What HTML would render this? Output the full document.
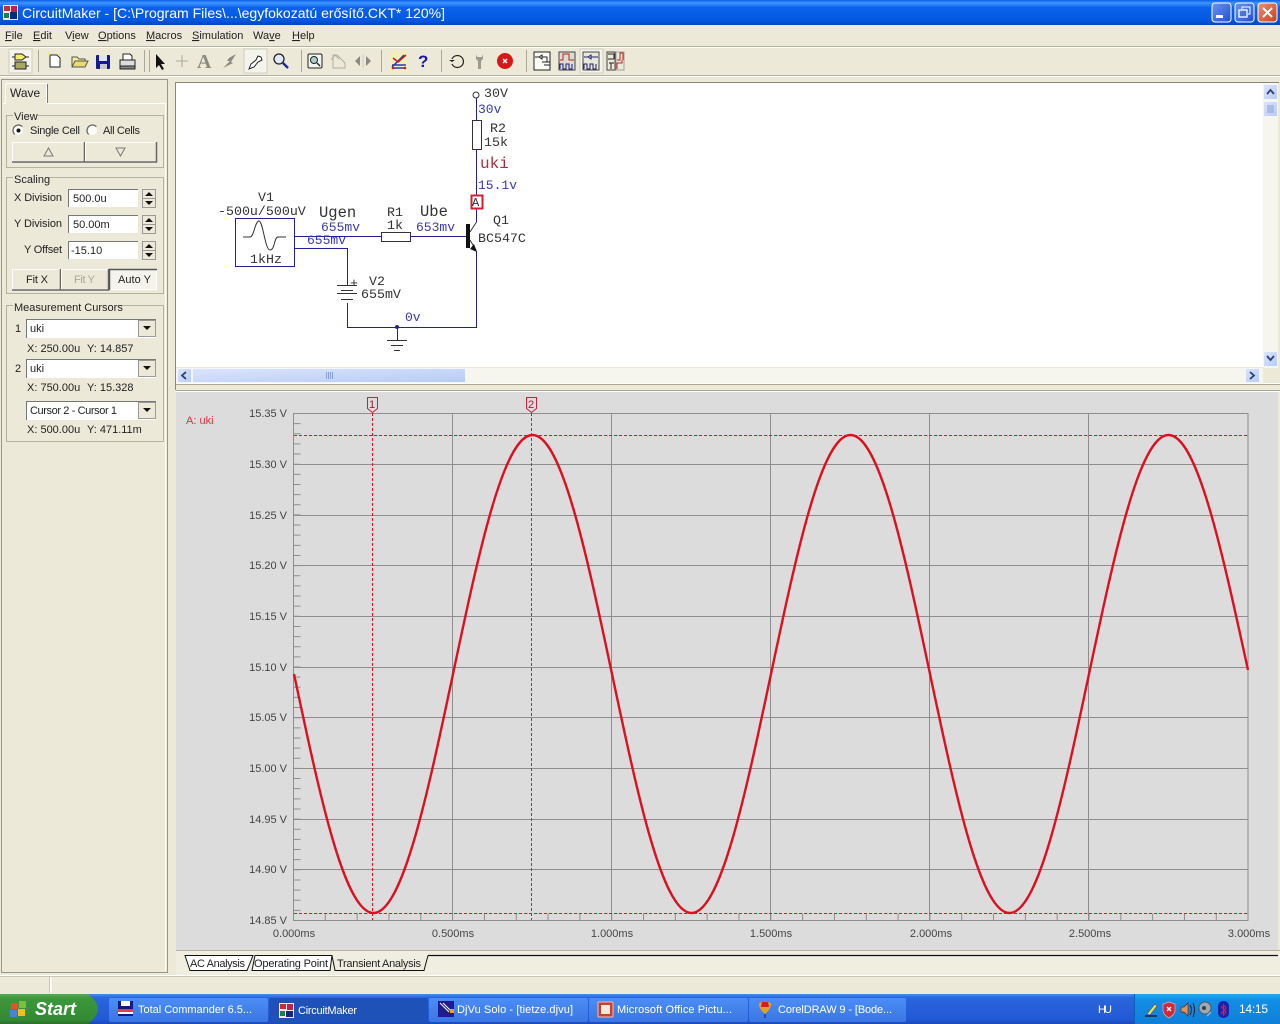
<!DOCTYPE html>
<html><head><meta charset="utf-8"><title>CircuitMaker</title>
<style>
html,body{margin:0;padding:0;background:#ece9d8;overflow:hidden}
svg{display:block}
text{font-family:"Liberation Sans",sans-serif;font-size:11px;fill:#222}
.m{font-family:"Liberation Mono",monospace;font-size:13.3px;fill:#333}
.b{font-family:"Liberation Mono",monospace;font-size:13px;fill:#3a3aa8}
.u{text-decoration:underline}
.yl{font-size:11px;fill:#444;text-anchor:end}
.xl{font-size:11px;fill:#444;text-anchor:middle}
.tb{font-size:11px;fill:#fff}
.w{stroke:#20209a;fill:none}
</style></head><body>
<svg width="1280" height="1024" viewBox="0 0 1280 1024" xmlns="http://www.w3.org/2000/svg">
<defs>
<linearGradient id="tg" x1="0" y1="0" x2="0" y2="1"><stop offset="0" stop-color="#0a5fe8"/><stop offset=".12" stop-color="#3d95ff"/><stop offset=".3" stop-color="#0a62ec"/><stop offset=".8" stop-color="#0358e0"/><stop offset="1" stop-color="#0246c4"/></linearGradient>
<linearGradient id="bar" x1="0" y1="0" x2="0" y2="1"><stop offset="0" stop-color="#4a8cf0"/><stop offset=".12" stop-color="#2a66dc"/><stop offset=".85" stop-color="#2259d6"/><stop offset="1" stop-color="#1a48b8"/></linearGradient>
<linearGradient id="btn" x1="0" y1="0" x2="0" y2="1"><stop offset="0" stop-color="#4c8ef5"/><stop offset="1" stop-color="#3a76e4"/></linearGradient>
<linearGradient id="st" x1="0" y1="0" x2="0" y2="1"><stop offset="0" stop-color="#57a957"/><stop offset=".15" stop-color="#3b983b"/><stop offset=".85" stop-color="#358a35"/><stop offset="1" stop-color="#2a702a"/></linearGradient>
<linearGradient id="tray" x1="0" y1="0" x2="0" y2="1"><stop offset="0" stop-color="#20a8f0"/><stop offset=".2" stop-color="#128fe6"/><stop offset="1" stop-color="#0f7fd8"/></linearGradient>
<linearGradient id="wb" x1="0" y1="0" x2="1" y2="1"><stop offset="0" stop-color="#6b96f0"/><stop offset="1" stop-color="#1f4fd0"/></linearGradient>
<linearGradient id="wr" x1="0" y1="0" x2="1" y2="1"><stop offset="0" stop-color="#ec9076"/><stop offset="1" stop-color="#c8401c"/></linearGradient>
<linearGradient id="sb" x1="0" y1="0" x2="1" y2="1"><stop offset="0" stop-color="#dbe5fb"/><stop offset="1" stop-color="#b7cbf5"/></linearGradient>
</defs>

<rect width="1280" height="1024" fill="#ece9d8"/>

<!-- title bar -->
<rect width="1280" height="25" fill="url(#tg)"/>
<rect x="3" y="5" width="15" height="15" fill="#f4e8ec"/>
<rect x="4" y="6" width="6" height="5" fill="#c83030"/><rect x="11" y="6" width="6" height="6" fill="#c02050"/><rect x="10" y="12" width="7" height="7" fill="#102880"/><rect x="4" y="13" width="5" height="5" fill="#208040"/>
<text x="22" y="18" textLength="423" lengthAdjust="spacingAndGlyphs" style="font-size:14px;fill:#fff">CircuitMaker - [C:\Program Files\...\egyfokozatú erősítő.CKT* 120%]</text>
<rect x="1212" y="3" width="19" height="19" rx="3" fill="url(#wb)" stroke="#fff"/><rect x="1216" y="15" width="7" height="3" fill="#fff"/>
<rect x="1235" y="3" width="19" height="19" rx="3" fill="url(#wb)" stroke="#fff"/><rect x="1239" y="10" width="8" height="7" fill="none" stroke="#fff" stroke-width="1.3"/><path d="M1242 9V7h8v7h-2" fill="none" stroke="#fff"/>
<rect x="1258" y="3" width="19" height="19" rx="3" fill="url(#wr)" stroke="#fff"/><path d="M1263 8l9 9M1272 8l-9 9" stroke="#fff" stroke-width="2"/>

<!-- menu -->
<text x="5" y="39"><tspan class="u">F</tspan>ile</text>
<text x="33" y="39"><tspan class="u">E</tspan>dit</text>
<text x="65" y="39">V<tspan class="u">i</tspan>ew</text>
<text x="98" y="39"><tspan class="u">O</tspan>ptions</text>
<text x="146" y="39"><tspan class="u">M</tspan>acros</text>
<text x="192" y="39"><tspan class="u">S</tspan>imulation</text>
<text x="253" y="39">Wa<tspan class="u">v</tspan>e</text>
<text x="292" y="39"><tspan class="u">H</tspan>elp</text>
<path d="M0 46.5H1280" stroke="#b5b29f"/><path d="M0 47.5H1280" stroke="#fff"/>
<path d="M0 75.5H1280" stroke="#b5b29f"/><path d="M0 76.5H1280" stroke="#fff"/>

<!-- toolbar -->
<path d="M38.5 50V72M144.5 50V72M149.5 50V72M301.5 50V72M381.5 50V72M441.5 50V72M526.5 50V72" stroke="#aca899"/>
<rect x="9" y="49" width="23" height="24" fill="#f5f4ec" stroke="#d0cdbd"/>
<path d="M15 54h7l4 3-4 3h-7z" fill="#f4ee60" stroke="#222"/><path d="M12 57h3M26 57h3M12 66h3M26 66h3" stroke="#222"/><rect x="15" y="62" width="11" height="7" fill="#a8a860" stroke="#222"/>
<path d="M50 55h7l3 3v9h-10z" fill="#fff" stroke="#222"/><path d="M48 53l2 2M60 54l-2 2" stroke="#ee0"/>
<path d="M72 66v-9h5l2 2h6v2" fill="#f4ee90" stroke="#555"/><path d="M72 67l3-6h13l-3 6z" fill="#e8dc70" stroke="#555"/>
<rect x="96" y="55" width="14" height="14" rx="1" fill="#121a90"/><rect x="99" y="55" width="8" height="6" fill="#dfe4f8"/><rect x="100" y="64" width="7" height="5" fill="#c8c8c8"/>
<path d="M123 54h7l2 2v5h-9z" fill="#fff" stroke="#222"/><rect x="120" y="60" width="15" height="6" fill="#ddd" stroke="#222"/><rect x="120" y="66" width="15" height="3" fill="#888" stroke="#222"/>
<path d="M156 54v14l3-3 3 5 2-1-3-5h4z" fill="#111"/>
<path d="M182 55v12M176 61h12" stroke="#b8b6a8" stroke-width="1.3"/>
<text x="197" y="68" style="font-family:'Liberation Serif',serif;font-size:20px;font-weight:bold;fill:#8a8a80">A</text>
<path d="M236 54l-7 4-2 3 3 0-7 7 10-5-2-1 5-8z" fill="#8a8a80"/>
<rect x="244" y="49" width="23" height="24" fill="#f5f4ec" stroke="#d0cdbd"/>
<path d="M249 69l2-5 5-4 2-4 3 1 1 3-4 2-4 5z" fill="#fff" stroke="#222"/>
<circle cx="279" cy="59" r="5" fill="#dfeaf5" stroke="#222" stroke-width="1.3"/><path d="M283 63l5 5" stroke="#1a2a9c" stroke-width="2.4"/>
<rect x="308" y="54" width="14" height="14" rx="1.5" fill="#f4f4f0" stroke="#222"/><circle cx="314" cy="60" r="3.5" fill="#a8d0d0" stroke="#222"/><path d="M317 63l3 3" stroke="#222" stroke-width="1.4"/>
<path d="M333 68V55h4l8 8v5z" fill="none" stroke="#b0aea0"/><path d="M331 60l4-5 4 4" fill="none" stroke="#b0aea0"/>
<path d="M360 56l-5 5 5 5zM366 56l5 5-5 5z" fill="#8a8a80"/><path d="M363 54V68" stroke="#ccc"/>
<rect x="390" y="51" width="18" height="22" fill="#f6f0a8" opacity=".6"/>
<path d="M392 67l6-6 6-6M392 65h14M392 68h14" stroke="#2a3ab0" stroke-width="1.5" fill="none"/><path d="M393 58l5 4 8-7" stroke="#c02020" stroke-width="1.6" fill="none"/><circle cx="393" cy="68" r="1.3" fill="#c02020"/><circle cx="405" cy="68" r="1.3" fill="#c02020"/>
<text x="418" y="67" style="font-size:17px;font-weight:bold;fill:#1a1a9c">?</text>
<path d="M452 59a6 6 0 1 1 0 5" fill="none" stroke="#222" stroke-width="1.2"/><path d="M449 60h6l-3 2z" fill="#222"/>
<path d="M476 54v5l2 2v8h3v-8l2-2v-5l-1 3h-5z" fill="#9a9a8e"/>
<circle cx="505" cy="61" r="8" fill="#d81818"/><path d="M503 59l4 4M507 59l-4 4" stroke="#fff" stroke-width="1.5"/>
<rect x="534" y="52" width="16" height="18" fill="#fafaf6" stroke="#222"/><path d="M535 57h4l3-2v4l-3-2M542 57h5v5M542 62h8M544 65h6" stroke="#222" fill="none"/>
<rect x="559" y="52" width="16" height="18" fill="#dcdcd0" stroke="#444"/><path d="M560 60h3v-6h6v6h5" stroke="#c02020" fill="none"/><path d="M560 69v-5h3v5h3v-5h3v5h3v-5" stroke="#202080" fill="none"/>
<rect x="580" y="49" width="23" height="24" fill="#f5f4ec" stroke="#d0cdbd"/>
<rect x="583" y="52" width="16" height="18" fill="#e8e8dc" stroke="#444"/><path d="M584 57h4l3-2v4l-3-2M591 57h7M584 69v-5h3v5h3v-5h3v5h3v-5" stroke="#202060" fill="none"/>
<path d="M608 54h6v5M608 59h6M609 63h5M611 63v6" stroke="#222" fill="none"/><rect x="607" y="52" width="8" height="18" fill="none" stroke="#444"/><path d="M617 60h3v-7h3v7M617 69v-6h5v-3" stroke="#c02020" fill="none"/><rect x="616" y="52" width="8" height="18" fill="none" stroke="#a0a0a0"/>

<!-- left panel -->
<path d="M1.5 79.5H167.5V972.5H1.5z" fill="#ece9d8" stroke="#9a9786"/>
<path d="M2.500 103.500H5.500V85l1-1.500H46.500V103.500H165.500V971" fill="none" stroke="#fff"/>
<path d="M47.500 84V103" stroke="#777"/>
<text x="10" y="97" style="font-size:12px">Wave</text>
<path d="M13 115.500H6.500V167.500H163.500V115.500H38" fill="none" stroke="#b5b29f"/>
<text x="14" y="120">View</text>
<path d="M14.600 134.400a5.500 5.500 0 0 1 7.800-7.800" fill="none" stroke="#666" stroke-width="1.200"/><circle cx="18.500" cy="130.500" r="4.500" fill="#fff"/><circle cx="18.500" cy="130.500" r="2" fill="#111"/>
<text x="30" y="134" textLength="50">Single Cell</text>
<circle cx="92.500" cy="130.500" r="4.500" fill="#fff"/><path d="M88.600 134.400a5.500 5.500 0 0 1 7.800-7.800" fill="none" stroke="#666" stroke-width="1.200"/>
<text x="103" y="134" textLength="37">All Cells</text>
<rect x="12.500" y="142.500" width="72" height="19" fill="#ece9d8" stroke="#fff"/><path d="M84.500 142V162H12" stroke="#666" stroke-width="1.500" fill="none"/>
<rect x="85.500" y="142.500" width="71" height="19" fill="#ece9d8" stroke="#fff"/><path d="M156.500 142V162H85" stroke="#666" stroke-width="1.500" fill="none"/>
<path d="M48.500 148l-4.500 8h9zM116 148h9l-4.500 8z" fill="none" stroke="#777"/>

<path d="M13 177.500H6.500V293.500H163.500V177.500H50" fill="none" stroke="#b5b29f"/>
<text x="14" y="183">Scaling</text>
<text x="14" y="201" textLength="48">X Division</text>
<text x="14" y="227" textLength="48">Y Division</text>
<text x="24" y="253" textLength="38">Y Offset</text>
<rect x="68" y="189" width="70" height="18" fill="#fff"/><rect x="68" y="215" width="70" height="18" fill="#fff"/><rect x="68" y="241" width="70" height="18" fill="#fff"/>
<path d="M68.500 207V189.500H138M68.500 233V215.500H138M68.500 259V241.500H138" fill="none" stroke="#777"/>
<text x="73" y="202">500.0u</text><text x="73" y="228">50.00m</text><text x="71" y="254">-15.10</text>
<g fill="#ece9d8" stroke="#999">
<rect x="142.500" y="189.500" width="13" height="9"/><rect x="142.500" y="198.500" width="13" height="9"/>
<rect x="142.500" y="215.500" width="13" height="9"/><rect x="142.500" y="224.500" width="13" height="9"/>
<rect x="142.500" y="241.500" width="13" height="9"/><rect x="142.500" y="250.500" width="13" height="9"/>
</g>
<path d="M149 192l-4 4h8zM145 201h8l-4 4zM149 218l-4 4h8zM145 227h8l-4 4zM149 244l-4 4h8zM145 253h8l-4 4z" fill="#111"/>
<rect x="12.500" y="269.500" width="48" height="20" fill="#ece9d8" stroke="#fff"/><path d="M60.500 269V290H12" stroke="#666" stroke-width="1.500" fill="none"/>
<rect x="61.500" y="269.500" width="47" height="20" fill="#ece9d8" stroke="#fff"/><path d="M108.500 269V290H61" stroke="#666" stroke-width="1.500" fill="none"/>
<rect x="109.500" y="269.500" width="47" height="20" fill="#f5f4ec" stroke="#fff"/><path d="M109.500 290V269.500H157" stroke="#555" stroke-width="1.500" fill="none"/>
<text x="26" y="283" textLength="22">Fit X</text>
<text x="74" y="283" textLength="21" style="fill:#aaa79a">Fit Y</text>
<text x="118" y="283" textLength="33">Auto Y</text>

<path d="M13 305.500H6.500V441.500H163.500V305.500H117" fill="none" stroke="#b5b29f"/>
<text x="14" y="311">Measurement Cursors</text>
<text x="15" y="332">1</text><text x="15" y="372">2</text>
<rect x="26" y="319" width="130" height="19" fill="#fff"/><rect x="26" y="359" width="130" height="19" fill="#fff"/><rect x="26" y="401" width="130" height="19" fill="#fff"/>
<path d="M26.500 338V319.500H156M26.500 378V359.500H156M26.500 420V401.500H156" fill="none" stroke="#777"/>
<g fill="#ece9d8" stroke="#999">
<rect x="138.500" y="320.500" width="17" height="16"/><rect x="138.500" y="360.500" width="17" height="16"/><rect x="138.500" y="402.500" width="17" height="16"/>
</g>
<path d="M143 326h8l-4 4zM143 366h8l-4 4zM143 408h8l-4 4z" fill="#111"/>
<text x="30" y="332">uki</text><text x="30" y="372">uki</text><text x="30" y="414" textLength="87">Cursor 2 - Cursor 1</text>
<text x="27" y="352">X: 250.00u</text><text x="87" y="352">Y: 14.857</text>
<text x="27" y="391">X: 750.00u</text><text x="87" y="391">Y: 15.328</text>
<text x="27" y="433">X: 500.00u</text><text x="87" y="433">Y: 471.11m</text>

<!-- circuit panel -->
<path d="M175 82.500H1279M175.500 82V390" stroke="#8a8778"/>
<rect x="176" y="83" width="1087" height="284" fill="#fff"/>
<rect x="1263" y="83" width="15" height="285" fill="#f6f5ee"/>
<rect x="176" y="368" width="1087" height="15" fill="#f6f5ee"/>
<g fill="url(#sb)" stroke="#f4f6fe">
<rect x="1263.500" y="84.500" width="14" height="15" rx="1"/><rect x="1263.500" y="101.500" width="14" height="15" rx="1"/><rect x="1263.500" y="351.500" width="14" height="15" rx="1"/>
<rect x="177.500" y="368.500" width="14" height="14" rx="1"/><rect x="192.500" y="368.500" width="273" height="14" rx="1"/><rect x="1245.500" y="368.500" width="14" height="14" rx="1"/>
</g>
<path d="M1267 94l3.500-4 3.500 4M1267 356l3.500 4 3.500-4M186 372l-4 3.500 4 3.500M1250 372l4 3.500-4 3.500" fill="none" stroke="#2c3f78" stroke-width="1.800"/>
<path d="M1267 106h7M1267 108h7M1267 110h7M1267 112h7M326.500 372v7M328.500 372v7M330.500 372v7M332.500 372v7" stroke="#8aa0d4"/>
<path d="M176 383.500H1280" stroke="#fff"/><path d="M176 384.500H1280" stroke="#aca899"/><path d="M176 390.500H1280" stroke="#aca899"/><path d="M176 391.500H1280" stroke="#fff"/>

<!-- schematic -->
<circle cx="476" cy="95" r="3" fill="#fff" stroke="#333"/>
<path class="w" d="M476.500 98V120M476.500 149V195M476.500 208V222M295 236.500H381M410 236.500H466M476.500 251V327.500H347.500V303M347.500 285V248.500H295M397.500 327V340"/>
<rect x="472.500" y="120.500" width="9" height="29" fill="#fff" stroke="#333"/>
<rect x="381.500" y="232.500" width="29" height="9" fill="#fff" stroke="#333"/>
<rect x="471.500" y="195.500" width="11" height="13" fill="#fff" stroke="#d02030" stroke-width="2"/>
<text x="472" y="206" class="m" style="font-size:12px">A</text>
<path d="M476.500 222L470 232" stroke="#333" fill="none"/>
<rect x="466" y="224" width="4" height="24" fill="#111"/>
<path d="M470 240L476 250" stroke="#333"/><path d="M477 252l-7-3 4-5z" fill="#111"/>
<rect x="235.500" y="218.500" width="59" height="48" fill="#fff" stroke="#20209a"/>
<path d="M243 237h7c4 0 5-16 9-16s6 29 11 29 4-13 8-13h8" fill="none" stroke="#333"/>
<path d="M337 285.500h20M341 290.500h12M337 293.500h20M341 299.500h12" stroke="#333"/>
<circle cx="397" cy="327" r="2" fill="#20209a"/>
<path d="M387 340.500h20M391 345.500h12M394 350.500h6" stroke="#333"/>
<text class="m" x="484" y="97">30V</text>
<text class="b" x="478" y="113">30v</text>
<text class="m" x="490" y="132">R2</text>
<text class="m" x="484" y="146">15k</text>
<text class="m" x="480" y="168" style="font-size:16px;fill:#a83040">uki</text>
<text class="b" x="478" y="189">15.1v</text>
<text class="m" x="493" y="224">Q1</text>
<text class="m" x="478" y="242">BC547C</text>
<text class="m" x="258" y="201">V1</text>
<text class="m" x="218" y="215">-500u/500uV</text>
<text class="m" x="319" y="217" style="font-size:15.500px">Ugen</text>
<text class="m" x="420" y="216" style="font-size:15.500px">Ube</text>
<text class="m" x="387" y="216">R1</text>
<text class="m" x="387" y="229">1k</text>
<text class="b" x="321" y="231">655mv</text>
<text class="b" x="307" y="244">655mv</text>
<text class="b" x="416" y="231">653mv</text>
<text class="m" x="250" y="263">1kHz</text>
<text class="m" x="350" y="287">+</text>
<text class="m" x="369" y="285">V2</text>
<text class="m" x="361" y="298">655mV</text>
<text class="b" x="405" y="321">0v</text>

<!-- plot -->
<rect x="176" y="392" width="1102" height="558" fill="#dcdcdc"/>
<text x="186" y="424" style="fill:#e03040">A: uki</text>
<path d="M293 413.500H1248M293 464.500H1248M293 515.500H1248M293 565.500H1248M293 616.500H1248M293 667.500H1248M293 717.500H1248M293 768.500H1248M293 819.500H1248M293 869.500H1248M293 920.500H1248M293.500 413V921M452.500 413V921M611.500 413V921M770.500 413V921M929.500 413V921M1088.500 413V921M1248 413V921" stroke="#8e8e8e" fill="none"/>
<path d="M297 413V920" stroke="#8e8e8e" stroke-width="7" stroke-dasharray="1 9.140" fill="none"/>
<path d="M293 917H1248" stroke="#8e8e8e" stroke-width="7" stroke-dasharray="1 30.820" fill="none"/>
<text class="yl" x="287" y="417">15.35 V</text><text class="yl" x="287" y="468">15.30 V</text><text class="yl" x="287" y="519">15.25 V</text><text class="yl" x="287" y="569">15.20 V</text><text class="yl" x="287" y="620">15.15 V</text><text class="yl" x="287" y="671">15.10 V</text><text class="yl" x="287" y="721">15.05 V</text><text class="yl" x="287" y="772">15.00 V</text><text class="yl" x="287" y="823">14.95 V</text><text class="yl" x="287" y="873">14.90 V</text><text class="yl" x="287" y="924">14.85 V</text>
<text class="xl" x="294" y="937">0.000ms</text><text class="xl" x="453" y="937">0.500ms</text><text class="xl" x="612" y="937">1.000ms</text><text class="xl" x="771" y="937">1.500ms</text><text class="xl" x="931" y="937">2.000ms</text><text class="xl" x="1090" y="937">2.500ms</text><text class="xl" x="1249" y="937">3.000ms</text>
<path d="M294 435.500H1248" stroke="#f00a30" stroke-dasharray="3 2" fill="none"/>
<path d="M294 913.500H1248" stroke="#f00a30" stroke-dasharray="3 2" fill="none"/>
<path d="M372.500 413V920" stroke="#f00a30" stroke-dasharray="3 2" fill="none"/>
<path d="M531.500 413V920" stroke="#f00a30" stroke-dasharray="3 2" fill="none"/>
<path d="M367.500 397.500h10v11l-5 4-5-4zM526.500 397.500h10v11l-5 4-5-4z" fill="#dcdcdc" stroke="#c82040"/>
<text x="369" y="408" style="font-size:11px;fill:#a02030">1</text><text x="528" y="408" style="font-size:11px;fill:#a02030">2</text>
<path d="M294 674c25.930 122.400 50.730 239 79.500 239c28.770 0 53.570-116.600 79.500-239c25.930-122.400 50.730-239 79.500-239c28.770 0 53.570 116.600 79.500 239c25.930 122.400 50.730 239 79.500 239c28.770 0 53.570-116.600 79.500-239c25.930-122.400 50.730-239 79.500-239c28.770 0 53.570 116.600 79.500 239c25.930 122.400 50.730 239 79.500 239c28.770 0 53.570-116.600 79.500-239c25.930-122.400 50.730-239 79.500-239c28.770 0 53.570 116.600 79.500 235" fill="none" stroke="#dc1020" stroke-width="2.400"/>

<!-- bottom tabs -->
<rect x="176" y="950" width="1104" height="25" fill="#f0eee0"/>
<path d="M176 950.500H1280" stroke="#b5b29f"/>
<path d="M428 955.500H1278" stroke="#111" stroke-width="1.200"/>
<path d="M185 955.500L190 970.500H247L253 955.500z" fill="#fff" stroke="#111"/>
<path d="M255 955.500L252 970.500H330L332 955.500z" fill="#fff" stroke="#111"/>
<path d="M332 955.500L335 970.500H424L428 955.500" fill="#f0eee0" stroke="#111"/>
<text x="190" y="967" textLength="55">AC Analysis</text>
<text x="254" y="967" textLength="74">Operating Point</text>
<text x="337" y="967" textLength="84">Transient Analysis</text>

<!-- status -->
<path d="M0 975.500H1280" stroke="#fff"/><path d="M0 976.500H1280" stroke="#c8c5b2"/>
<path d="M50.500 977V993" stroke="#fff" stroke-width="2"/><path d="M49.500 977V993" stroke="#c8c5b2"/>

<!-- taskbar -->
<rect y="994" width="1280" height="30" fill="url(#bar)"/>
<path d="M0 994H88q10 8 10 15t-10 15H0z" fill="url(#st)"/>
<rect x="11" y="1003" width="7" height="6" fill="#e8502a"/><rect x="19" y="1001" width="7" height="7" fill="#7ac040"/><rect x="10" y="1010" width="7" height="7" fill="#4a80e0"/><rect x="18" y="1009" width="7" height="7" fill="#f0c020"/>
<text x="35" y="1015" style="font-size:18px;font-style:italic;font-weight:bold;fill:#fff">Start</text>

<rect x="109" y="998" width="159" height="24" rx="2" fill="url(#btn)"/>
<rect x="269" y="998" width="159" height="24" rx="2" fill="#1e52b8"/>
<rect x="429" y="998" width="159" height="24" rx="2" fill="url(#btn)"/>
<rect x="589" y="998" width="159" height="24" rx="2" fill="url(#btn)"/>
<rect x="749" y="998" width="157" height="24" rx="2" fill="url(#btn)"/>
<rect x="118" y="1001" width="15" height="15" fill="#101a80"/><rect x="121" y="1001" width="9" height="5" fill="#fff"/><rect x="118" y="1009" width="15" height="3" fill="#e04040"/><rect x="118" y="1012" width="15" height="2" fill="#fff"/>
<text class="tb" x="138" y="1013" textLength="114">Total Commander 6.5...</text>
<rect x="279" y="1003" width="15" height="15" fill="#f4e8ec"/><rect x="280" y="1004" width="6" height="5" fill="#c83030"/><rect x="287" y="1004" width="6" height="6" fill="#c02050"/><rect x="286" y="1011" width="7" height="6" fill="#102880"/><rect x="280" y="1011" width="5" height="5" fill="#208040"/>
<text class="tb" x="298" y="1014" textLength="59">CircuitMaker</text>
<rect x="438" y="1001" width="16" height="16" fill="#201a90"/><path d="M440 1003l9 9M443 1003l8 8" stroke="#fff"/><rect x="450" y="1009" width="4" height="4" fill="#f0a020"/>
<text class="tb" x="457" y="1013" textLength="116">DjVu Solo - [tietze.djvu]</text>
<rect x="598" y="1002" width="15" height="15" rx="1" fill="#c84030" stroke="#f4c0b0"/><rect x="601" y="1005" width="9" height="9" fill="#f4e8d8"/>
<text class="tb" x="617" y="1013" textLength="115">Microsoft Office Pictu...</text>
<path d="M759 1004c0-3 12-3 12 0 0 5-4 8-6 10-2-2-6-5-6-10z" fill="#e8a020"/><path d="M762 1002h6l1 5h-8z" fill="#d02020"/><path d="M764 1014h2v4h-2z" fill="#4040a0"/>
<text class="tb" x="778" y="1013" textLength="114">CorelDRAW 9 - [Bode...</text>
<text class="tb" x="1098" y="1013" textLength="14">HU</text>
<rect x="1134" y="994" width="146" height="30" fill="url(#tray)"/><path d="M1134.500 994V1024" stroke="#0a60b8"/>
<path d="M1147 1014l8-10 2 2-7 9z" fill="#f0e040" stroke="#4040a0" stroke-width=".6"/><path d="M1145 1016h12" stroke="#222" stroke-width="1.500"/>
<path d="M1163 1004l6-2 6 2v6c0 4-3 6-6 8-3-2-6-4-6-8z" fill="#d02838" stroke="#f0b0b0" stroke-width=".7"/><path d="M1167 1007l4 4M1171 1007l-4 4" stroke="#fff" stroke-width="1.300"/>
<path d="M1181 1007h3l4-4v13l-4-4h-3z" fill="#e89050" stroke="#702010" stroke-width=".7"/><path d="M1190 1005q3 5 0 10M1193 1003q3 7 0 14" stroke="#222" fill="none"/>
<circle cx="1205" cy="1008" r="6" fill="#a0a8b0" stroke="#505860"/><circle cx="1204" cy="1008" r="2" fill="#3a4048"/><path d="M1207 1016l4-4" stroke="#80b8f0" stroke-width="1.500"/>
<rect x="1218" y="1001" width="11" height="17" rx="5" fill="#1a20b0"/><path d="M1221 1006l5 6-2.500 3v-10l2.500 3-5 6" stroke="#e02030" fill="none"/>
<text x="1239" y="1013" textLength="29" style="font-size:12px;fill:#fff">14:15</text>
</svg>
</body></html>
